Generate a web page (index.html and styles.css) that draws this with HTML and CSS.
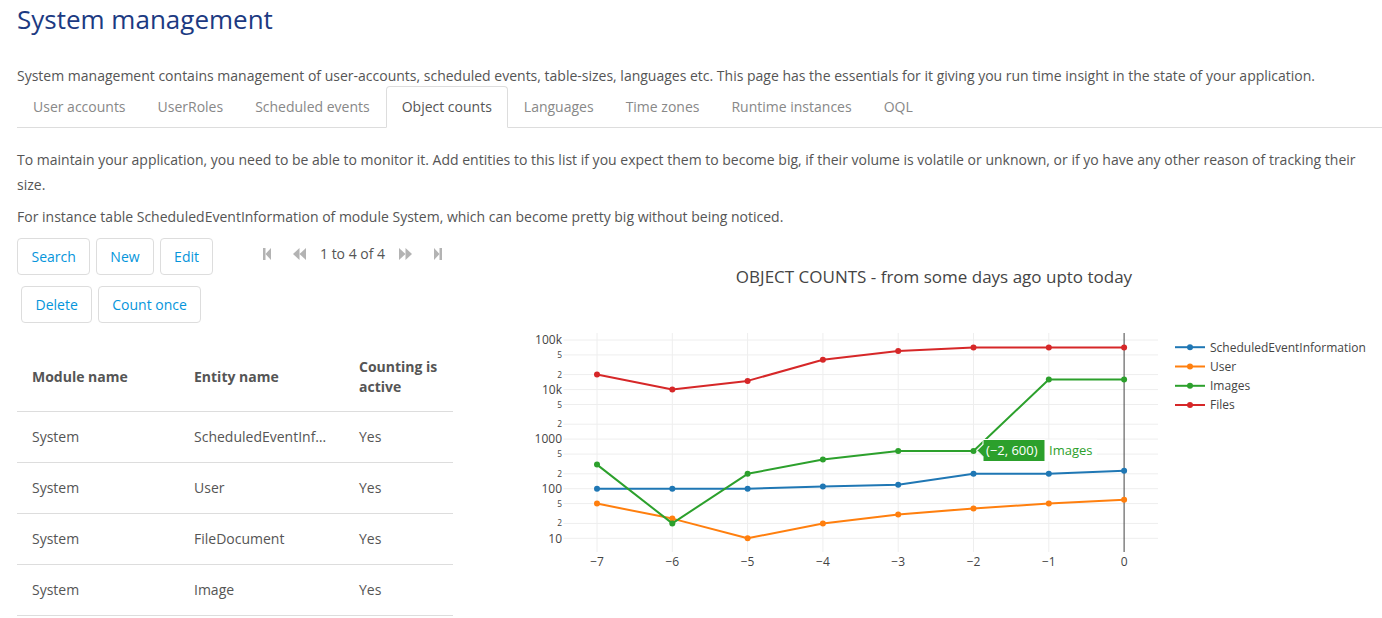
FILE: index.html
```html
<!DOCTYPE html>
<html>
<head>
<meta charset="utf-8">
<link rel="stylesheet" href="styles.css">
</head>
<body>
<div class="page">
  <h1 class="title">System management</h1>
  <p class="intro">System management contains management of user-accounts, scheduled events, table-sizes, languages etc. This page has the essentials for it giving you run time insight in the state of your application.</p>
  <ul class="tabs">
    <li><a>User accounts</a></li>
    <li><a>UserRoles</a></li>
    <li><a>Scheduled events</a></li>
    <li class="active"><a>Object counts</a></li>
    <li><a>Languages</a></li>
    <li><a>Time zones</a></li>
    <li><a>Runtime instances</a></li>
    <li><a>OQL</a></li>
  </ul>
  <div class="content">
    <p class="lead">To maintain your application, you need to be able to monitor it. Add entities to this list if you expect them to become big, if their volume is volatile or unknown, or if yo have any other reason of tracking their size.</p>
    <p class="lead">For instance table ScheduledEventInformation of module System, which can become pretty big without being noticed.</p>
    <div class="split">
      <div class="left">
        <div class="btn-row">
          <button class="btn">Search</button>
          <button class="btn">New</button>
          <button class="btn">Edit</button>
          <div class="pager">
            <svg class="pg first" width="8" height="12" viewBox="0 0 8 12"><rect x="0" y="0" width="2.5" height="12"/><polygon points="8,0 2.5,6 8,12"/></svg>
            <svg class="pg prev" width="13" height="12" viewBox="0 0 13 12"><polygon points="6.5,0 0,6 6.5,12"/><polygon points="13,0 6.5,6 13,12"/></svg>
            <span class="pg-text">1 to 4 of 4</span>
            <svg class="pg next" width="13" height="12" viewBox="0 0 13 12"><polygon points="0,0 6.5,6 0,12"/><polygon points="6.5,0 13,6 6.5,12"/></svg>
            <svg class="pg last" width="8" height="12" viewBox="0 0 8 12"><polygon points="0,0 5.5,6 0,12"/><rect x="5.5" y="0" width="2.5" height="12"/></svg>
          </div>
        </div>
        <div class="btn-row second">
          <button class="btn">Delete</button>
          <button class="btn">Count once</button>
        </div>
        <table class="grid">
          <colgroup><col class="c1"><col class="c2"><col class="c3"></colgroup>
          <thead>
            <tr><th>Module name</th><th>Entity name</th><th>Counting is active</th></tr>
          </thead>
          <tbody>
            <tr><td>System</td><td>ScheduledEventInformation</td><td>Yes</td></tr>
            <tr><td>System</td><td>User</td><td>Yes</td></tr>
            <tr><td>System</td><td>FileDocument</td><td>Yes</td></tr>
            <tr><td>System</td><td>Image</td><td>Yes</td></tr>
          </tbody>
        </table>
      </div>
      <div class="chart">
        <svg class="plot" width="929" height="380" viewBox="453 238 929 380">
          <text class="ptitle" x="934" y="282.5" text-anchor="middle">OBJECT COUNTS - from some days ago upto today</text>
          <g class="hgrid">
            <line x1="563.5" x2="1158" y1="340" y2="340"/>
            <line x1="563.5" x2="1158" y1="354.9" y2="354.9"/>
            <line x1="563.5" x2="1158" y1="374.6" y2="374.6"/>
            <line x1="563.5" x2="1158" y1="389.6" y2="389.6"/>
            <line x1="563.5" x2="1158" y1="404.5" y2="404.5"/>
            <line x1="563.5" x2="1158" y1="424.2" y2="424.2"/>
            <line x1="563.5" x2="1158" y1="439.1" y2="439.1"/>
            <line x1="563.5" x2="1158" y1="454.1" y2="454.1"/>
            <line x1="563.5" x2="1158" y1="473.8" y2="473.8"/>
            <line x1="563.5" x2="1158" y1="488.7" y2="488.7"/>
            <line x1="563.5" x2="1158" y1="503.6" y2="503.6"/>
            <line x1="563.5" x2="1158" y1="523.4" y2="523.4"/>
            <line x1="563.5" x2="1158" y1="538.3" y2="538.3"/>
          </g>
          <g class="vgrid">
            <line x1="597" x2="597" y1="333" y2="552"/>
            <line x1="672.3" x2="672.3" y1="333" y2="552"/>
            <line x1="747.6" x2="747.6" y1="333" y2="552"/>
            <line x1="822.9" x2="822.9" y1="333" y2="552"/>
            <line x1="898.2" x2="898.2" y1="333" y2="552"/>
            <line x1="973.5" x2="973.5" y1="333" y2="552"/>
            <line x1="1048.8" x2="1048.8" y1="333" y2="552"/>
          </g>
          <line class="zero" x1="1124.1" x2="1124.1" y1="333" y2="552"/>
          <g class="ylab" text-anchor="end">
            <text class="maj" x="562" y="344.3">100k</text>
            <text class="min" x="562" y="357.9">5</text>
            <text class="min" x="562" y="377.6">2</text>
            <text class="maj" x="562" y="393.9">10k</text>
            <text class="min" x="562" y="407.5">5</text>
            <text class="min" x="562" y="427.2">2</text>
            <text class="maj" x="562" y="443.4">1000</text>
            <text class="min" x="562" y="457.1">5</text>
            <text class="min" x="562" y="476.8">2</text>
            <text class="maj" x="562" y="493">100</text>
            <text class="min" x="562" y="506.6">5</text>
            <text class="min" x="562" y="526.4">2</text>
            <text class="maj" x="562" y="542.6">10</text>
          </g>
          <g class="xlab" text-anchor="middle">
            <text x="597" y="566">−7</text>
            <text x="672.3" y="566">−6</text>
            <text x="747.6" y="566">−5</text>
            <text x="822.9" y="566">−4</text>
            <text x="898.2" y="566">−3</text>
            <text x="973.5" y="566">−2</text>
            <text x="1048.8" y="566">−1</text>
            <text x="1124.1" y="566">0</text>
          </g>
          <g class="trace s-blue">
            <polyline points="597,488.7 672.3,488.7 747.6,488.7 822.9,486.6 898.2,484.7 973.5,473.8 1048.8,473.8 1124.1,470.8"/>
            <circle cx="597" cy="488.7" r="3"/><circle cx="672.3" cy="488.7" r="3"/><circle cx="747.6" cy="488.7" r="3"/><circle cx="822.9" cy="486.6" r="3"/><circle cx="898.2" cy="484.7" r="3"/><circle cx="973.5" cy="473.8" r="3"/><circle cx="1048.8" cy="473.8" r="3"/><circle cx="1124.1" cy="470.8" r="3"/>
          </g>
          <g class="trace s-orange">
            <polyline points="597,503.6 672.3,518.6 747.6,538.3 822.9,523.4 898.2,514.6 973.5,508.4 1048.8,503.6 1124.1,499.7"/>
            <circle cx="597" cy="503.6" r="3"/><circle cx="672.3" cy="518.6" r="3"/><circle cx="747.6" cy="538.3" r="3"/><circle cx="822.9" cy="523.4" r="3"/><circle cx="898.2" cy="514.6" r="3"/><circle cx="973.5" cy="508.4" r="3"/><circle cx="1048.8" cy="503.6" r="3"/><circle cx="1124.1" cy="499.7" r="3"/>
          </g>
          <g class="trace s-green">
            <polyline points="597,464.6 672.3,523.4 747.6,473.8 822.9,459.6 898.2,450.9 973.5,450.9 1048.8,379.5 1124.1,379.5"/>
            <circle cx="597" cy="464.6" r="3"/><circle cx="672.3" cy="523.4" r="3"/><circle cx="747.6" cy="473.8" r="3"/><circle cx="822.9" cy="459.6" r="3"/><circle cx="898.2" cy="450.9" r="3"/><circle cx="973.5" cy="450.9" r="3"/><circle cx="1048.8" cy="379.5" r="3"/><circle cx="1124.1" cy="379.5" r="3"/>
          </g>
          <g class="trace s-red">
            <polyline points="597,374.6 672.3,389.6 747.6,380.9 822.9,359.7 898.2,351 973.5,347.6 1048.8,347.6 1124.1,347.6"/>
            <circle cx="597" cy="374.6" r="3"/><circle cx="672.3" cy="389.6" r="3"/><circle cx="747.6" cy="380.9" r="3"/><circle cx="822.9" cy="359.7" r="3"/><circle cx="898.2" cy="351" r="3"/><circle cx="973.5" cy="347.6" r="3"/><circle cx="1048.8" cy="347.6" r="3"/><circle cx="1124.1" cy="347.6" r="3"/>
          </g>
          <g class="hover">
            <rect class="namebg" x="1045" y="439.5" width="52" height="22"/>
            <path class="hbox" d="M977,450.5 L983,444.5 V439.5 H1045 V461.5 H983 V456.5 Z"/>
            <text class="hval" x="986" y="455">(−2, 600)</text>
            <text class="hname" x="1049" y="455">Images</text>
          </g>
          <g class="legend">
            <g class="s-blue"><line x1="1175" x2="1205" y1="347.2" y2="347.2"/><circle cx="1190" cy="347.2" r="3"/></g>
            <text x="1210" y="351.5">ScheduledEventInformation</text>
            <g class="s-orange"><line x1="1175" x2="1205" y1="366.5" y2="366.5"/><circle cx="1190" cy="366.5" r="3"/></g>
            <text x="1210" y="370.8">User</text>
            <g class="s-green"><line x1="1175" x2="1205" y1="385.8" y2="385.8"/><circle cx="1190" cy="385.8" r="3"/></g>
            <text x="1210" y="390.1">Images</text>
            <g class="s-red"><line x1="1175" x2="1205" y1="405" y2="405"/><circle cx="1190" cy="405" r="3"/></g>
            <text x="1210" y="409.3">Files</text>
          </g>
        </svg>
      </div>
    </div>
  </div>
</div>
</body>
</html>
```
FILE: styles.css
```css
html, body {
  margin: 0;
  padding: 0;
  background: #fff;
}
body {
  font-family: "Open Sans", "Liberation Sans", sans-serif;
  font-size: 14px;
  line-height: 20px;
  color: #555;
}
.page {
  padding-left: 17px;
}
.title {
  margin: 5px 0 0;
  font-size: 26px;
  line-height: 29px;
  font-weight: 400;
  color: #1c3a82;
}
.intro {
  margin: 32px 0 0;
}
.tabs {
  list-style: none;
  margin: 0;
  padding: 0;
  display: flex;
  border-bottom: 1px solid #ddd;
}
.tabs li {
  margin-bottom: -1px;
}
.tabs a {
  display: block;
  padding: 10px 15px;
  border: 1px solid transparent;
  border-radius: 4px 4px 0 0;
  color: #888;
  text-decoration: none;
}
.tabs .active a {
  border-color: #ddd;
  border-bottom-color: #fff;
  background: #fff;
  color: #555;
}
.content {
  padding-top: 19px;
}
.lead {
  margin: 0 0 7px;
  line-height: 25px;
}
.split {
  display: flex;
  margin-top: 9px;
}
.left {
  width: 436px;
  flex: none;
}
.chart {
  flex: 1;
  min-width: 0;
}
.plot {
  display: block;
}
.btn-row {
  display: flex;
  align-items: flex-start;
}
.btn-row.second {
  margin-top: 11px;
  padding-left: 4px;
}
.btn {
  height: 37px;
  box-sizing: border-box;
  padding: 0 13.5px;
  margin: 0 5.5px 0 0;
  border: 1px solid #ddd;
  border-radius: 4px;
  background: #fff;
  color: #0595db;
  font-family: inherit;
  font-size: 14px;
  line-height: 20px;
}
.pager {
  display: flex;
  align-items: center;
  margin-left: 44px;
  margin-top: 6px;
  height: 20px;
}
.pg {
  display: block;
  fill: #b3b3b3;
}
.pg.first { margin-right: 22px; }
.pg.prev { margin-right: 14px; }
.pg.next { margin-left: 14px; margin-right: 22px; }
.pg-text {
  color: #555;
}
.grid {
  width: 436px;
  margin-top: 19px;
  border-collapse: collapse;
  table-layout: fixed;
}
.grid .c1 { width: 162px; }
.grid .c2 { width: 165px; }
.grid .c3 { width: 109px; }
.grid th,
.grid td {
  padding: 15px;
  text-align: left;
  vertical-align: middle;
  border-bottom: 1px solid #ddd;
}
.grid th {
  font-weight: 700;
  padding-bottom: 14px;
}
.grid td {
  white-space: nowrap;
  overflow: hidden;
  text-overflow: ellipsis;
}
.plot text {
  font-family: "Open Sans", "Liberation Sans", sans-serif;
  fill: #444;
}
.plot .ptitle {
  font-size: 17px;
}
.hgrid line,
.vgrid line {
  stroke: #eee;
  stroke-width: 1;
}
.zero {
  stroke: #444;
  stroke-width: 1;
}
.ylab .maj { font-size: 12px; }
.ylab .min { font-size: 8.4px; }
.xlab text { font-size: 12px; }
.trace polyline {
  fill: none;
  stroke-width: 2;
  stroke-linejoin: round;
}
.s-blue polyline, .s-blue line { stroke: #1f77b4; }
.s-blue circle { fill: #1f77b4; }
.s-orange polyline, .s-orange line { stroke: #ff7f0e; }
.s-orange circle { fill: #ff7f0e; }
.s-green polyline, .s-green line { stroke: #2ca02c; }
.s-green circle { fill: #2ca02c; }
.s-red polyline, .s-red line { stroke: #d62728; }
.s-red circle { fill: #d62728; }
.legend line {
  stroke-width: 2;
}
.legend text {
  font-size: 12px;
}
.hover .namebg {
  fill: #fff;
  opacity: 0.85;
}
.hover .hbox {
  fill: #2ca02c;
  stroke: #fff;
  stroke-width: 1;
}
.plot .hval {
  font-size: 13px;
  fill: #fff;
}
.plot .hname {
  font-size: 13px;
  fill: #2ca02c;
}
```
